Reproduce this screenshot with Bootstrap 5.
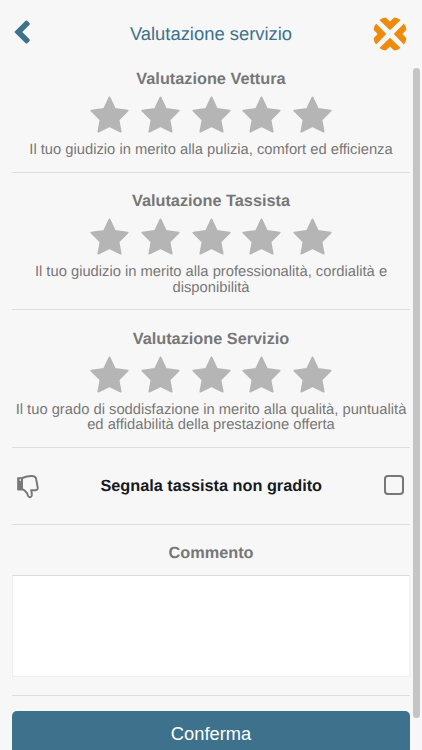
<!DOCTYPE html>
<html lang="it">
<head>
<meta charset="utf-8">
<meta name="viewport" content="width=device-width, initial-scale=1">
<title>Valutazione servizio</title>
<link href="https://cdn.jsdelivr.net/npm/bootstrap@5.3.0/dist/css/bootstrap.min.css" rel="stylesheet">
<style>
  body { height: 750px; background: #f7f7f7; color: #777; font-family: "Liberation Sans", Arial, sans-serif; text-rendering: geometricPrecision; }
  svg { display: block; }
  .topbar { height: 69px; padding: 0 15px 0 14px; }
  .topbar h1 { font-size: 18.4px; line-height: 22px; color: #3e728c; margin: 23px 0 0 1px; }
  .back { width: 36px; padding-top: 19px; }
  .brand { width: 36px; padding: 17px 0 0 2px; }
  .content { padding: 0 12.4px; }
  .topic { font-size: 16.3px; line-height: 20px; margin: 0; }
  .rating { border-bottom: 1px solid #dcdddd; padding: 18.2px 0 13.5px; }
  .rating:first-child { padding-top: 0; }
  .stars { gap: 11.9px; margin: 7.3px 0 9.9px; }
  .hint { font-size: 14.74px; line-height: 15.3px; margin: 0; }
  .report { height: 77.1px; border-bottom: 1px solid #dcdddd; padding: 0 5.5px 0 4px; color: #161a1f; }
  .report svg { margin-top: 2px; }
  .report label { margin-right: 2px; }
  .report .form-check-input { width: 20px; height: 20px; border: 2px solid #777; border-radius: 4px; background: transparent; margin: 0 0 2px; }
  .comment { padding-top: 18px; border-bottom: 1px solid #dcdddd; }
  .comment textarea { height: 102px; border: 1px solid #efefef; border-top-color: #d7dbdd; resize: none; margin: 12px 0 17.5px; background: #fff; }
  .confirm { height: 50px; margin-top: 15.5px; background: #3e728c; font-size: 18.3px; border-radius: 5px; padding: 0 0 4px; border: 0; color: #fff; }
  .scroll-thumb { top: 68px; left: 413.4px; width: 6.4px; height: 650px; background: #c4c4c4; }
</style>
</head>
<body class="position-relative overflow-hidden">
<svg class="d-none" aria-hidden="true">
  <symbol id="star" viewBox="0 0 39 37"><path d="M19.5 1.4 24.9 13 37.7 14.6 28.5 23.8 30.7 35.6 19.5 30.1 8.3 35.6 10.5 23.8 1.3 14.6 14.1 13Z" fill="#b5b5b5" stroke="#b5b5b5" stroke-width="1.8" stroke-linejoin="round"/></symbol>
</svg>

<header class="topbar d-flex justify-content-between align-items-start">
  <a class="back" href="#" aria-label="Indietro">
    <svg width="17" height="26" viewBox="0 0 17 26"><path d="M.3 13 11.6 1.8Q12.5 1 13.4 1.8L15.5 3.9Q16.3 4.8 15.5 5.7L8.3 13 15.5 20.3Q16.3 21.2 15.5 22.1L13.4 24.2Q12.5 25 11.6 24.2Z" fill="#3e728c"/></svg>
  </a>
  <h1 class="fw-normal mb-0">Valutazione servizio</h1>
  <div class="brand">
    <svg width="34" height="34" viewBox="0 0 34 34" fill="#ee8b0c">
      <path id="chev" d="M6.4 3.1 Q9.2 1 12.8.6L17 4.6 21.2.6Q24.8 1 27.6 3.1L17 13.3Z"/>
      <use href="#chev" transform="rotate(90 17 17)"/>
      <use href="#chev" transform="rotate(180 17 17)"/>
      <use href="#chev" transform="rotate(270 17 17)"/>
    </svg>
  </div>
</header>

<main class="content text-center">
  <section class="rating">
    <h2 class="topic fw-bold">Valutazione Vettura</h2>
    <div class="stars d-flex justify-content-center">
      <svg width="39" height="37"><use href="#star"/></svg><svg width="39" height="37"><use href="#star"/></svg><svg width="39" height="37"><use href="#star"/></svg><svg width="39" height="37"><use href="#star"/></svg><svg width="39" height="37"><use href="#star"/></svg>
    </div>
    <p class="hint">Il tuo giudizio in merito alla pulizia, comfort ed efficienza</p>
  </section>
  <section class="rating">
    <h2 class="topic fw-bold">Valutazione Tassista</h2>
    <div class="stars d-flex justify-content-center">
      <svg width="39" height="37"><use href="#star"/></svg><svg width="39" height="37"><use href="#star"/></svg><svg width="39" height="37"><use href="#star"/></svg><svg width="39" height="37"><use href="#star"/></svg><svg width="39" height="37"><use href="#star"/></svg>
    </div>
    <p class="hint">Il tuo giudizio in merito alla professionalità, cordialità e<br>disponibilità</p>
  </section>
  <section class="rating">
    <h2 class="topic fw-bold">Valutazione Servizio</h2>
    <div class="stars d-flex justify-content-center">
      <svg width="39" height="37"><use href="#star"/></svg><svg width="39" height="37"><use href="#star"/></svg><svg width="39" height="37"><use href="#star"/></svg><svg width="39" height="37"><use href="#star"/></svg><svg width="39" height="37"><use href="#star"/></svg>
    </div>
    <p class="hint">Il tuo grado di soddisfazione in merito alla qualità, puntualità<br>ed affidabilità della prestazione offerta</p>
  </section>
  <div class="report d-flex justify-content-between align-items-center">
    <svg width="24" height="25" viewBox="0 0 25 25" preserveAspectRatio="none" fill="none" stroke="#777" stroke-width="2" stroke-linejoin="round" stroke-linecap="round">
      <path d="M2.2 4.2H6.3V15.4H2.2Z" fill="#777"/>
      <path d="M6.5 4C10 2.6 14 1.7 18.3 2.2 20 2.4 20.8 3.6 21 5.2L22.6 13.5C22.9 15.2 22 16.2 20.5 16.2H15.7C16.4 18.2 16.9 20 16.4 21.7 15.8 23.5 13.2 23.7 12.6 21.8 12 19.7 11.2 18.2 9.8 17.3 8.6 16.4 7.8 15.4 6.5 15.2"/>
      <circle cx="4.4" cy="5.9" r=".9" fill="#f7f7f7" stroke="none"/>
    </svg>
    <label class="topic fw-bold" for="report">Segnala tassista non gradito</label>
    <input class="form-check-input" type="checkbox" id="report">
  </div>
  <section class="comment">
    <h2 class="topic fw-bold">Commento</h2>
    <textarea class="form-control rounded-0" aria-label="Commento"></textarea>
  </section>
  <button class="confirm btn w-100" type="button">Conferma</button>
</main>
<div class="scroll-thumb position-absolute rounded-pill"></div>
<script src="https://cdn.jsdelivr.net/npm/bootstrap@5.3.0/dist/js/bootstrap.bundle.min.js"></script>
</body>
</html>
